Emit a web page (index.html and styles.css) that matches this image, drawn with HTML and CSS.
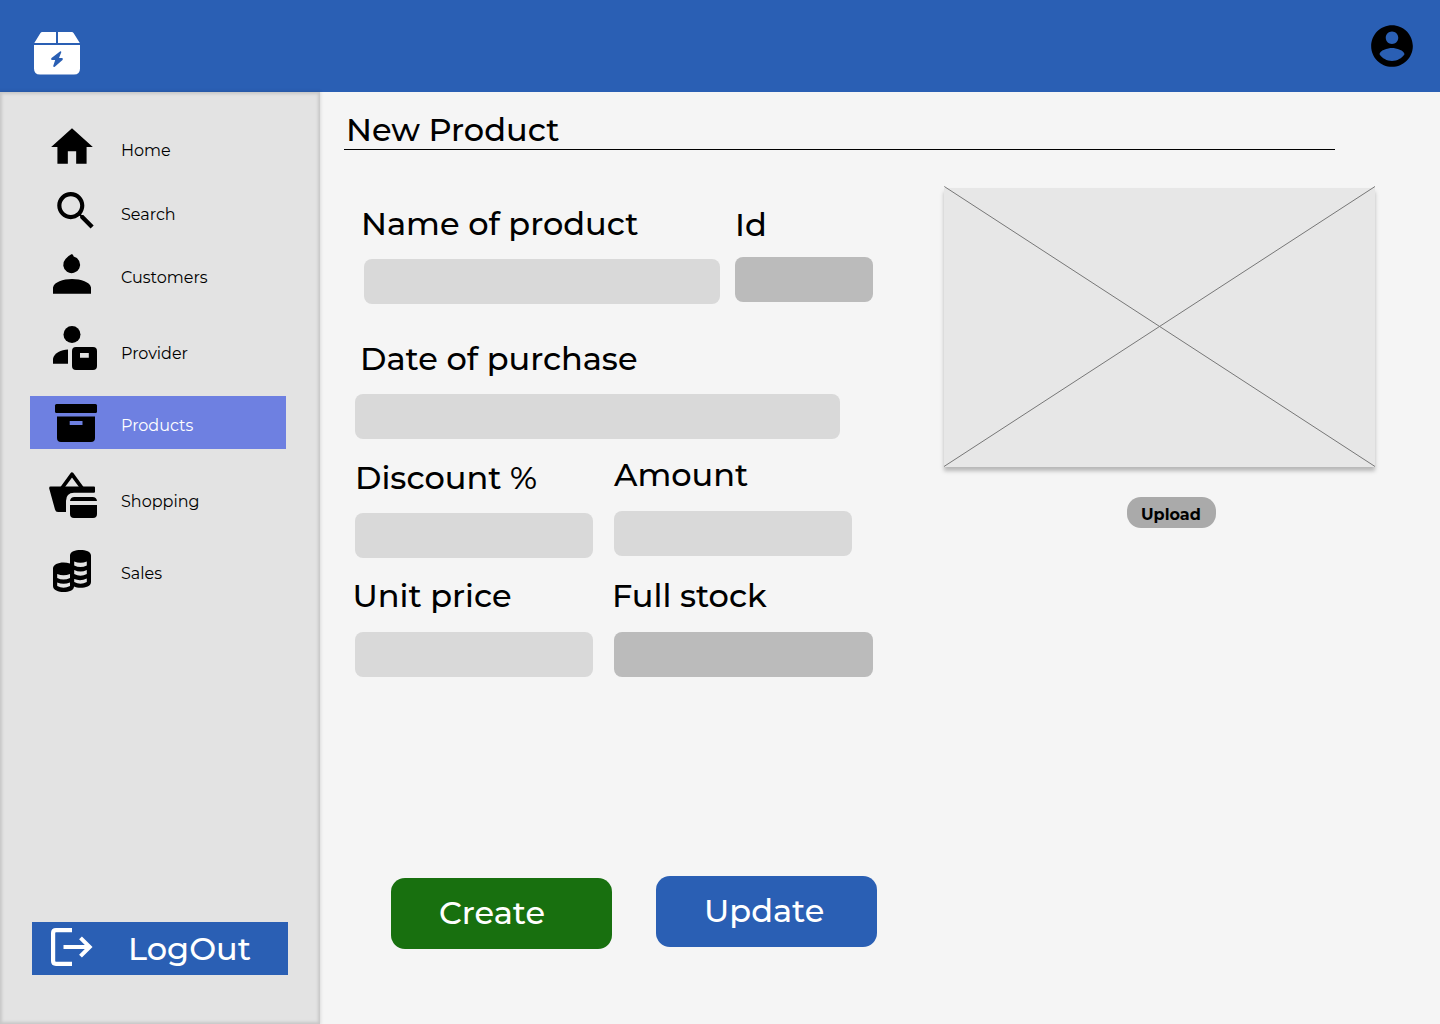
FILE: index.html
```html
<!DOCTYPE html>
<html lang="en">
<head>
<meta charset="utf-8">
<title>New Product</title>
<link rel="stylesheet" href="styles.css">
</head>
<body>
<header class="topbar">
  <svg class="logo" viewBox="0 0 46 43" fill="#fff"><path d="M8.500 0H22V11H.3L6.300 1.200Q7 0 8.500 0ZM24 0H37.500Q39 0 39.700 1.200L45.800 11H24Z"/><path fill-rule="evenodd" d="M0 13H46V36.500Q46 42.500 40 42.500H6Q0 42.500 0 36.500ZM26.300 19.300L17.500 26Q16.200 27.600 18 28H21.200L19.200 34Q19.400 35.500 20.800 34.800L28.500 28Q29.700 26.400 28 26H25L27.300 20.300Q27.400 19.200 26.300 19.300Z"/></svg>
  <svg class="account" viewBox="0 0 24 24"><path d="M12 2C6.480 2 2 6.480 2 12s4.480 10 10 10 10-4.480 10-10S17.520 2 12 2zm0 3c1.660 0 3 1.340 3 3s-1.340 3-3 3-3-1.340-3-3 1.340-3 3-3zm0 14.200c-2.500 0-4.710-1.280-6-3.220.030-1.990 4-3.080 6-3.080 1.990 0 5.970 1.090 6 3.080-1.290 1.940-3.500 3.220-6 3.220z"/></svg>
</header>
<div class="shell">
  <aside class="sidebar">
    <nav class="menu">
      <a class="item home"><svg viewBox="30 121 80 53"><path transform="translate(47 122) scale(2.0833)" d="M10 20v-6h4v6h5v-8h3L12 3 2 12h3v8z"/></svg><span>Home</span></a>
      <a class="item search"><svg viewBox="30 185 80 53"><path transform="translate(51 185.8) scale(2.0833)" d="M15.500 14h-.790l-.280-.270C15.410 12.590 16 11.110 16 9.500 16 5.910 13.090 3 9.500 3S3 5.910 3 9.500 5.910 16 9.500 16c1.610 0 3.090-.590 4.230-1.570l.270.280v.790l5 4.990L20.490 19l-4.990-5zm-6 0C7.010 14 5 11.990 5 9.500S7.010 5 9.500 5 14 7.010 14 9.500 11.990 14 9.500 14z"/></svg><span>Search</span></a>
      <a class="item customers"><svg viewBox="30 248 80 53"><path d="M72 254Q73.500 255 73.700 256.600A8.400 8.400 0 1 1 65.500 259Q67.500 256 72 254ZM53 293.700V287.500C54 282 63 279 72 279S90 282 91 287.500V293.700Z"/></svg><span>Customers</span></a>
      <a class="item provider"><svg viewBox="30 324 80 53"><circle cx="72" cy="334.500" r="8.500"/><path d="M53 363.700V358.500C54.500 353 61 350 68 349.600V363.700Z"/><path fill-rule="evenodd" d="M76 347H93Q97 347 97 351V366Q97 370 93 370H76Q72 370 72 366V351Q72 347 76 347ZM80 353V357.700H88.800V353Z"/></svg><span>Provider</span></a>
      <a class="item products active"><svg viewBox="30 396 80 53"><rect x="55" y="404" width="42" height="9" rx="1.500"/><path fill-rule="evenodd" d="M57 416.500H95V438Q95 442 91 442H61Q57 442 57 438ZM69.700 421V425H82.500V421Z"/></svg><span>Products</span></a>
      <a class="item shopping"><svg viewBox="30 472 80 53"><path d="M62 488L72 474.300L82 488" fill="none" stroke="#000" stroke-width="3.800" stroke-linejoin="round"/><path d="M50.500 486.600H94Q95 486.600 95 487.600V491.800Q95 492.800 94 492.800H74Q66 493 66 501V512H58Q55.600 512 55 509.500L49.200 488.500Q49 486.600 50.500 486.600ZM70 501Q70.500 497 74.500 497H92.500Q96.500 497 97 501ZM70 505H97V514Q97 518 93 518H74Q70 518 70 514Z"/></svg><span>Shopping</span></a>
      <a class="item sales"><svg viewBox="30 544 80 53"><path fill-rule="evenodd" d="M70 555.500C70 548.300 91 548.300 91 555.500V582C91 588.500 78 588.800 74 586.500C74 594 53 594 53 586V568.500C53 563 63 561 70 563.500ZM74.200 561.500V565.500Q80.500 568.500 86.800 565.500V561.500Q80.500 564 74.200 561.500ZM74.200 570V574Q80.500 577.500 86.800 574V570Q80.500 573 74.200 570ZM74.200 579V582Q80.500 585.500 86.800 582V578.500Q80.500 581.500 74.200 579ZM57.200 574V578Q63.500 581 70 578V574Q63.500 576.500 57.200 574ZM57.200 582.500V586Q63.500 589.500 70 586V582.500Q63.500 585 57.200 582.500Z"/></svg><span>Sales</span></a>
    </nav>
    <a class="logout"><svg viewBox="32 922 80 53" fill="none" stroke="#fff"><path stroke-width="4.200" d="M72 930.200H56Q53.100 930.200 53.100 933V961Q53.100 963.800 56 963.800H72"/><path stroke-width="4" d="M63.500 947H90M80.500 937.800L89.700 947L80.500 956.200"/></svg><span>LogOut</span></a>
  </aside>
  <main class="main">
    <h1 class="title"><span>New Product</span></h1>
    <div class="content">
      <form class="form">
        <div class="row row-name">
          <div class="field name"><label>Name of product</label><div class="input"></div></div>
          <div class="field id"><label>Id</label><div class="input locked"></div></div>
        </div>
        <div class="row row-date">
          <div class="field date"><label>Date of purchase</label><div class="input"></div></div>
        </div>
        <div class="row row-discount">
          <div class="field discount"><label>Discount %</label><div class="input"></div></div>
          <div class="field amount"><label>Amount</label><div class="input"></div></div>
        </div>
        <div class="row row-price">
          <div class="field price"><label>Unit price</label><div class="input"></div></div>
          <div class="field stock"><label>Full stock</label><div class="input locked"></div></div>
        </div>
        <div class="actions">
          <div class="btn create"><span>Create</span></div>
          <div class="btn update"><span>Update</span></div>
        </div>
      </form>
      <section class="media">
        <div class="preview"><svg viewBox="0 2 431 279"><path d="M.3 .5L431 280.500M431 .5L0 280.500" fill="none" stroke="#777"/></svg></div>
        <div class="upload"><span>Upload</span></div>
      </section>
    </div>
  </main>
</div>
</body>
</html>
```
FILE: styles.css
```css
* { box-sizing: border-box; }
body {
  margin: 0;
  width: 1440px;
  height: 1024px;
  overflow: hidden;
  display: flex;
  flex-direction: column;
  background: #f5f5f5;
  color: #000;
  font-family: Montserrat, Inter, sans-serif;
}
svg { display: block; flex: none; }
span, label { white-space: nowrap; }

.topbar {
  height: 92px;
  flex: none;
  display: flex;
  justify-content: space-between;
  align-items: flex-start;
  padding: 21px 23px 0 34px;
  background: #2a5fb4;
}
.logo { width: 46px; height: 43px; margin-top: 11px; }
.account { width: 50px; height: 50px; }

.shell { flex: 1; display: flex; }
.sidebar {
  width: 320px;
  display: flex;
  flex-direction: column;
  justify-content: space-between;
  padding: 29px 0 49px 30px;
  background: #e3e3e3;
  box-shadow: inset 0 0 3px 2px rgba(0, 0, 0, .12), 0 0 3px 1px rgba(0, 0, 0, .1);
}
.item {
  display: flex;
  width: 256px;
  height: 53px;
  font-size: 16px;
  font-weight: 400;
  line-height: 20px;
}
.item svg { width: 80px; height: 53px; }
.item span { padding: 20px 0 0 11px; }
.search { margin-top: 11px; }
.customers { margin-top: 10px; }
.provider, .shopping { margin-top: 23px; }
.products, .sales { margin-top: 19px; }
.active { background: #6e80e1; color: #fff; }
.logout {
  display: flex;
  width: 256px;
  height: 53px;
  margin-left: 2px;
  background: #2a5fb4;
  color: #fff;
  font-size: 32px;
  line-height: 39px;
  font-weight: 500;
}
.logout svg { width: 80px; height: 53px; }
.logout span { padding: 7px 0 0 16px; }

.main { flex: 1; padding: 18px 0 0 24px; }
.title {
  margin: 0;
  width: 991px;
  height: 40px;
  border-bottom: 1px solid #000;
  padding-left: 2px;
  font-size: 32px;
  line-height: 39px;
  font-weight: 500;
}
.content { display: flex; }
.form { width: 600px; flex: none; }
.row { display: flex; align-items: flex-start; }
.field { display: flex; flex-direction: column; }
label {
  font-size: 32px;
  font-weight: 500;
  line-height: 39px;
  margin-bottom: 16px;
}
.input { height: 45px; border-radius: 8px; background: #d9d9d9; }
.locked { background: #bbb; }
.row-name { padding: 54px 0 0 20px; }
.name { width: 356px; margin-right: 15px; }
.name label { margin-left: -3px; }
.id { width: 138px; margin-top: 1px; }
.id label { margin-left: 0; margin-bottom: 13px; }
.row-date { padding: 35px 0 0 11px; }
.date { width: 485px; }
.date label { margin-left: 5px; }
.row-discount { padding: 19px 0 0 11px; }
.discount, .price { width: 238px; margin-right: 21px; }
.amount { width: 238px; margin-top: -3px; }
.amount label { margin-bottom: 17px; }
.row-price { padding: 18px 0 0 11px; }
.price label { margin-left: -2.500px; margin-bottom: 17px; }
.stock { width: 259px; }
.stock label { margin-left: -2px; margin-bottom: 17px; }
.actions { display: flex; align-items: flex-start; padding: 199px 0 0 47px; gap: 44px; }
.btn {
  width: 221px;
  height: 71px;
  border-radius: 14px;
  color: #fff;
  font-size: 32px;
  font-weight: 500;
  line-height: 39px;
  padding: 15px 0 0 48px;
}
.create { background: #18700f; margin-top: 2px; }
.update { background: #2a5fb4; }

.media { width: 431px; padding-top: 38px; }
.preview {
  height: 279px;
  background: #e7e7e7;
  box-shadow: 0 4px 4px rgba(0, 0, 0, .25);
}
.preview svg { width: 431px; height: 279px; overflow: visible; }
.upload {
  width: 89px;
  height: 31px;
  margin: 30px 0 0 183px;
  border-radius: 14px;
  background: #aaa;
  font-size: 16px;
  font-weight: 700;
  line-height: 20px;
  padding: 8px 0 0 14px;
}
```
